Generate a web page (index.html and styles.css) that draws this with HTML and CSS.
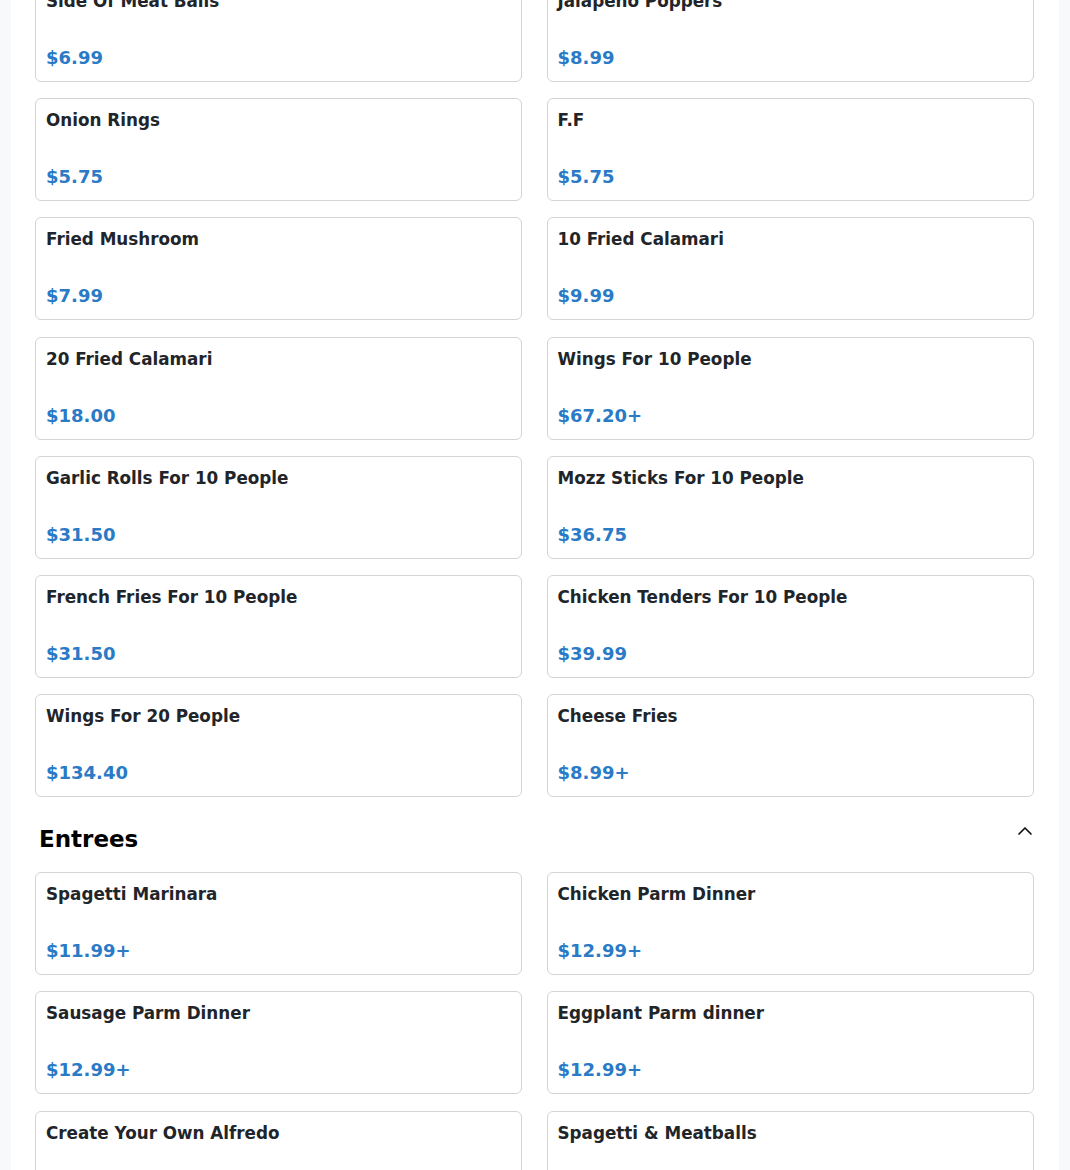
FILE: index.html
```html
<!DOCTYPE html>
<html lang="en">
<head>
<meta charset="utf-8">
<title>Menu</title>
<link rel="stylesheet" href="styles.css">
</head>
<body>
<main class="page">
  <section class="section section-first">
    <div class="grid">
      <div class="card"><div class="title">Side Of Meat Balls</div><div class="price">$6.99</div></div>
      <div class="card"><div class="title">Jalapeño Poppers</div><div class="price">$8.99</div></div>
      <div class="card"><div class="title">Onion Rings</div><div class="price">$5.75</div></div>
      <div class="card"><div class="title">F.F</div><div class="price">$5.75</div></div>
      <div class="card"><div class="title">Fried Mushroom</div><div class="price">$7.99</div></div>
      <div class="card"><div class="title">10 Fried Calamari</div><div class="price">$9.99</div></div>
      <div class="card"><div class="title">20 Fried Calamari</div><div class="price">$18.00</div></div>
      <div class="card"><div class="title">Wings For 10 People</div><div class="price">$67.20+</div></div>
      <div class="card"><div class="title">Garlic Rolls For 10 People</div><div class="price">$31.50</div></div>
      <div class="card"><div class="title">Mozz Sticks For 10 People</div><div class="price">$36.75</div></div>
      <div class="card"><div class="title">French Fries For 10 People</div><div class="price">$31.50</div></div>
      <div class="card"><div class="title">Chicken Tenders For 10 People</div><div class="price">$39.99</div></div>
      <div class="card"><div class="title">Wings For 20 People</div><div class="price">$134.40</div></div>
      <div class="card"><div class="title">Cheese Fries</div><div class="price">$8.99+</div></div>
    </div>
  </section>
  <section class="section">
    <div class="section-head">
      <h2 class="section-title">Entrees</h2>
      <svg class="chevron" width="16" height="16" viewBox="0 0 16 16" aria-hidden="true"><path d="M2 11 L8 5 L14 11" fill="none" stroke="#111" stroke-width="1.7" stroke-linecap="round" stroke-linejoin="round"/></svg>
    </div>
    <div class="grid">
      <div class="card"><div class="title">Spagetti Marinara</div><div class="price">$11.99+</div></div>
      <div class="card"><div class="title">Chicken Parm Dinner</div><div class="price">$12.99+</div></div>
      <div class="card"><div class="title">Sausage Parm Dinner</div><div class="price">$12.99+</div></div>
      <div class="card"><div class="title">Eggplant Parm dinner</div><div class="price">$12.99+</div></div>
      <div class="card"><div class="title">Create Your Own Alfredo</div><div class="price">$12.99+</div></div>
      <div class="card"><div class="title">Spagetti &amp; Meatballs</div><div class="price">$12.99+</div></div>
    </div>
  </section>
</main>
</body>
</html>
```
FILE: styles.css
```css
html, body {
  margin: 0;
  padding: 0;
  background: #f8f9fa;
  font-family: "DejaVu Sans", "Liberation Sans", sans-serif;
  color: #212529;
}

.page {
  width: 1048px;
  margin: 0 auto;
  background: #ffffff;
  padding: 0 24px;
  box-sizing: border-box;
  min-height: 1170px;
  overflow: hidden;
}

.section-first {
  margin-top: -21px;
}

.grid {
  display: grid;
  grid-template-columns: 487px 487.5px;
  column-gap: 24.5px;
  row-gap: 16.2px;
}

.card {
  height: 103px;
  box-sizing: border-box;
  border: 1px solid #d4d4d4;
  border-radius: 6px;
  padding: 10px;
  display: flex;
  flex-direction: column;
  justify-content: space-between;
}

.title {
  font-size: 16.8px;
  font-weight: bold;
  line-height: 22px;
  color: #212529;
}

.price {
  font-size: 18px;
  font-weight: bold;
  line-height: 27px;
  color: #2a7ac6;
}

.section-head {
  display: flex;
  justify-content: space-between;
  align-items: flex-start;
  padding: 0 4px;
  margin: 28px 0 19px;
}

.section-title {
  margin: 0;
  font-size: 23px;
  line-height: 28px;
  font-weight: bold;
  color: #000;
}

.chevron {
  margin-top: -2px;
  margin-right: -2px;
}
```
